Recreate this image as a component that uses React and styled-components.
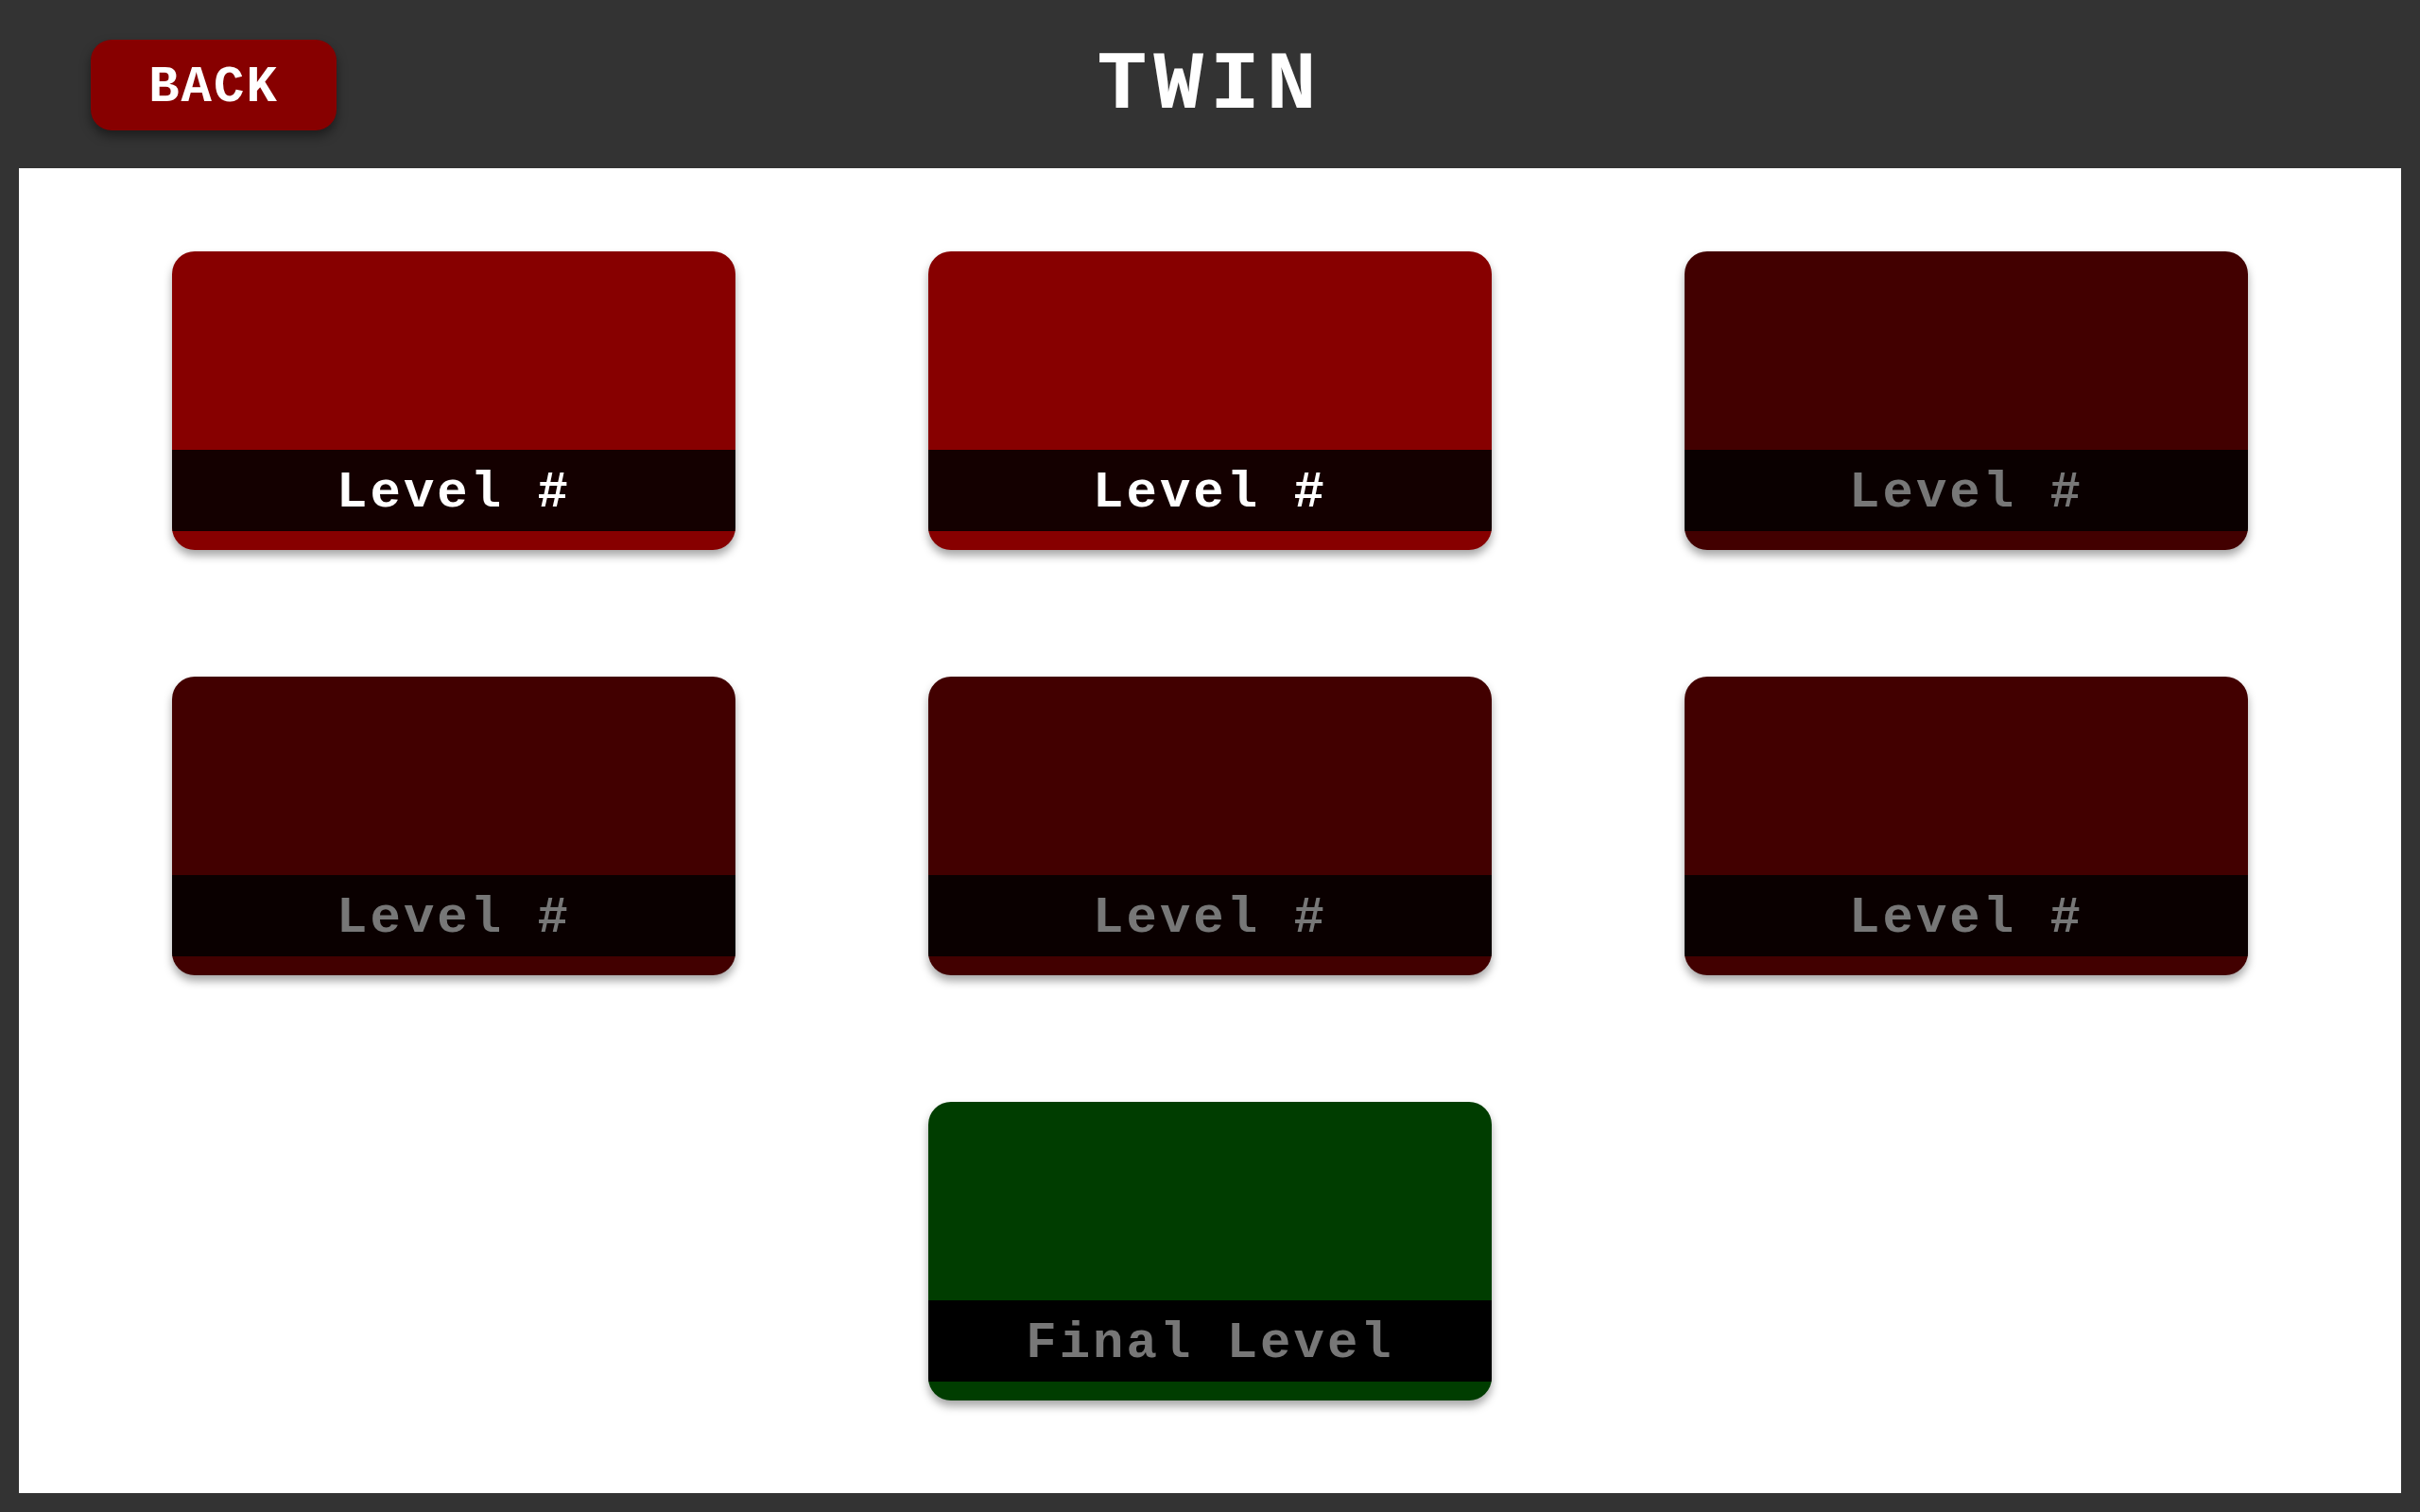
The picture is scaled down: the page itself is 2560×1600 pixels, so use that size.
import React from "react";
import styled, { createGlobalStyle } from "styled-components";

const GlobalStyle = createGlobalStyle`
  html, body {
    margin: 0;
    padding: 0;
    background: #333333;
  }
  body {
    font-family: "Liberation Mono", "DejaVu Sans Mono", monospace;
  }
`;

const Page = styled.div`
  width: 2560px;
  height: 1600px;
  display: flex;
  flex-direction: column;
  background: #333333;
`;

const Header = styled.header`
  height: 178px;
  display: grid;
  grid-template-columns: 1fr auto 1fr;
  align-items: center;
  padding: 0 96px;
  box-sizing: border-box;
`;

const BackButton = styled.button`
  justify-self: start;
  width: 260px;
  height: 96px;
  margin-top: 2px;
  border: none;
  border-radius: 22px;
  background: #870000;
  color: #ffffff;
  font-family: "Liberation Mono", monospace;
  font-weight: 700;
  font-size: 54px;
  letter-spacing: 2px;
  line-height: 1;
  padding: 6px 0 0;
  box-shadow: 0 6px 12px rgba(0, 0, 0, 0.45);
  cursor: pointer;
`;

const Title = styled.h1`
  margin: 0;
  color: #ffffff;
  font-family: "Liberation Mono", monospace;
  font-weight: 700;
  font-size: 88px;
  letter-spacing: 7px;
  line-height: 1;
  padding-top: 4px;
`;

const Board = styled.main`
  flex: 1;
  margin: 0 20px 20px;
  background: #ffffff;
  display: grid;
  grid-template-columns: repeat(3, 596px);
  grid-auto-rows: 316px;
  column-gap: 204px;
  row-gap: 134px;
  justify-content: center;
  align-content: start;
  padding-top: 88px;
`;

const Card = styled.div`
  grid-column: ${(p) => p.column || "auto"};
  display: flex;
  flex-direction: column;
  border-radius: 24px;
  overflow: hidden;
  background: ${(p) => p.bg};
  box-shadow: 0 6px 10px rgba(0, 0, 0, 0.35);
  cursor: pointer;
`;

const Spacer = styled.div`
  height: 210px;
`;

const Band = styled.div`
  height: 86px;
  display: flex;
  align-items: center;
  justify-content: center;
  background: ${(p) => p.band};
  color: ${(p) => p.ink};
  font-family: "Liberation Mono", monospace;
  font-weight: 700;
  font-size: 54px;
  letter-spacing: 3px;
  line-height: 1;
  padding-top: 6px;
  box-sizing: border-box;
  white-space: pre;
`;

const themes = {
  open: { bg: "#870000", band: "#140000", ink: "#ffffff" },
  locked: { bg: "#420000", band: "#0a0000", ink: "#777777" },
  final: { bg: "#003d00", band: "#000000", ink: "#777777" },
};

const levels = [
  { label: "Level #", kind: "open" },
  { label: "Level #", kind: "open" },
  { label: "Level #", kind: "locked" },
  { label: "Level #", kind: "locked" },
  { label: "Level #", kind: "locked" },
  { label: "Level #", kind: "locked" },
  { label: "Final Level", kind: "final", column: 2 },
];

function LevelCard({ label, kind, column }) {
  const t = themes[kind];
  return (
    <Card bg={t.bg} column={column}>
      <Spacer />
      <Band band={t.band} ink={t.ink}>
        {label}
      </Band>
    </Card>
  );
}

export default function App() {
  return (
    <>
      <GlobalStyle />
      <Page>
        <Header>
          <BackButton>BACK</BackButton>
          <Title>TWIN</Title>
          <div />
        </Header>
        <Board>
          {levels.map((l, i) => (
            <LevelCard key={i} {...l} />
          ))}
        </Board>
      </Page>
    </>
  );
}
